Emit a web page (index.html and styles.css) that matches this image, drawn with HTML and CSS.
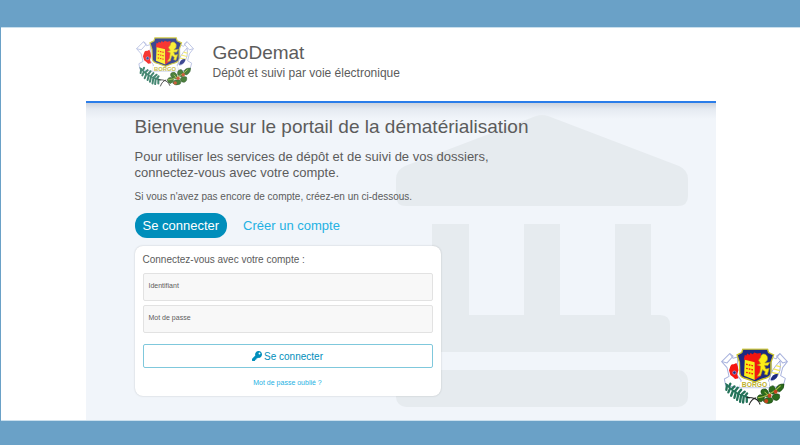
FILE: index.html
```html
<!DOCTYPE html>
<html lang="fr">
<head>
    <meta charset="UTF-8">
    <meta name="viewport" content="width=device-width, initial-scale=1.0">
    <title>GeoDemat</title>
    <link rel="stylesheet" href="styles.css">
</head>
<body>
    <div class="page">
        <div class="portal">
            <header class="header">
                <svg class="crest crest-header" viewBox="0 0 200 172" role="img" aria-label="Borgo">
                    <!-- Blason : ruban, écu, coquelicot, coquillage, feuillages -->
                    <symbol id="crest" viewBox="0 0 200 172">
                        <g fill="#fff" stroke="#aab4de" stroke-width="3" stroke-linejoin="round">
                            <path d="M50 26 L36 30 L26 16 L2 40 L18 58 L24 84 L10 92 L14 112 L56 118 L60 96 L48 80 Z"/>
                            <path d="M150 26 L164 32 L176 16 L198 40 L184 58 L178 82 L192 90 L186 112 L146 118 L142 96 L152 80 Z"/>
                            <path d="M26 16 L36 24 L18 44 L2 40 M176 16 L166 24 L184 44 L198 40" fill="none"/>
                        </g>
                        <path d="M56 100 H144 V118 H56 Z" fill="#fff"/>
                        <path d="M56 118 H144" stroke="#aab4de" stroke-width="2"/>
                        <path d="M65 3 H139 L142 13 L157 20 L149 42 V76 Q146 88 124 92 L102 101 L78 92 Q58 88 56 76 L55 42 L48 20 L62 13 Z" fill="#1c2a80" stroke="#c9c32c" stroke-width="4"/>
                        <path d="M71 32 L101 38 V95 L69 82 Z" fill="#fbee16"/>
                        <path d="M101 38 L120 30 V82 L101 95 Z" fill="#f51510"/>
                        <path d="M68 34 L71 20 L76 22 L78 16 L85 20 L88 14 L95 18 L99 13 L108 16 L119 14 V31 L101 42 Z" fill="#f51510"/>
                        <path d="M75 48 l22 5 M75 60 l22 5 M75 72 l22 5" fill="none" stroke="#f51510" stroke-width="4" stroke-dasharray="5 3"/>
                        <path d="M118 28 Q120 14 132 18 Q142 24 138 36 L131 44 L146 42 L140 52 L130 52 L134 62 L144 60 L138 80 L130 78 L132 70 L124 64 L118 82 L108 84 L116 72 L118 54 L108 50 L118 46 L112 36 Z" fill="#fbee16" stroke="#a8971c" stroke-width="2"/>
                        <path d="M28 54 Q30 46 38 48 L46 44 L50 54 L52 66 L48 78 L52 90 L42 92 L36 86 L28 80 L24 66 Z" fill="#f51510"/>
                        <circle cx="40" cy="73" r="5" fill="#1c2a80" stroke="#9eb0e8" stroke-width="2"/>
                        <path d="M176 38 Q182 70 162 92 Q146 104 146 88 Q148 68 176 38 Z" fill="#fff" stroke="#7886c8" stroke-width="2"/>
                        <path d="M164 52 L178 56 M156 62 L176 67 M151 72 L172 77" stroke="#f3e85a" stroke-width="4"/>
                        <path d="M149 96 Q150 76 170 76 Q170 94 149 96 Z" fill="#1c2a80"/>
                        <text x="100" y="116" class="crest-name" text-anchor="middle">BORGO</text>
                        <g fill="none" stroke="#25735a" stroke-width="7" stroke-linecap="round">
                            <path d="M14 106 Q36 136 84 148" stroke-width="4"/>
                            <path d="M18 110 L16 124 M27 120 L22 132 M36 127 L30 142 M44 132 L40 148 M52 136 L48 154 M60 140 L57 160 M68 143 L66 162 M77 146 L77 160"/>
                            <path d="M24 114 L28 106 M32 122 L40 114 M42 128 L50 118 M52 134 L60 124 M62 138 L71 130 M72 143 L78 135"/>
                        </g>
                        <g fill="#2c6b1c" stroke="#174512" stroke-width="2">
                            <path d="M108 148 Q112 134 128 142 Q134 150 120 160 Q110 160 108 148 Z"/>
                            <path d="M120 134 Q116 120 134 122 Q146 130 140 144 Q126 146 120 134 Z"/>
                            <path d="M126 158 Q130 146 146 147 Q160 150 152 162 Q136 170 126 158 Z"/>
                            <path d="M144 130 Q140 114 156 112 Q166 120 162 134 Q154 142 144 130 Z"/>
                            <path d="M152 146 Q158 132 174 138 Q178 152 166 156 Q156 156 152 146 Z"/>
                            <path d="M164 122 Q168 106 188 107 Q190 120 176 130 Q166 132 164 122 Z"/>
                        </g>
                        <path d="M110 148 Q146 144 178 112 M130 130 L142 142" fill="none" stroke="#a9c04a" stroke-width="3"/>
                        <g fill="#c4451c">
                            <circle cx="145" cy="142" r="6"/>
                            <circle cx="135" cy="158" r="6"/>
                            <circle cx="163" cy="130" r="6"/>
                        </g>
                        <path d="M84 170 Q90 152 104 148 M76 147 L92 148 Q110 150 117 168" fill="none" stroke="#222" stroke-width="3"/>
                    </symbol>
                    <use href="#crest"/>
                </svg>
                <div>
                    <h1 class="brand">GeoDemat</h1>
                    <p class="tagline">Dépôt et suivi par voie électronique</p>
                </div>
            </header>

            <main class="main">
                <svg class="bank" viewBox="0 0 292 292" aria-hidden="true">
                    <path d="M140 1 Q146 -1 152 1 L283 51 Q292 55 292 64 V81 Q292 91 282 91 H10 Q0 91 0 81 V64 Q0 55 9 51 Z"/>
                    <path d="M36 109 H73 V200 H128 V109 H164 V200 H219 V109 H255 V200 H264 Q274 200 274 210 V237 H18 V210 Q18 200 28 200 H36 Z"/>
                    <rect y="255" width="292" height="37" rx="10"/>
                </svg>

                <div class="content">
                    <h2 class="title">Bienvenue sur le portail de la dématérialisation</h2>
                    <p class="lead">Pour utiliser les services de dépôt et de suivi de vos dossiers,<br>connectez-vous avec votre compte.</p>
                    <p class="hint">Si vous n'avez pas encore de compte, créez-en un ci-dessous.</p>

                    <div class="tabs">
                        <button type="button" class="tab tab-active">Se connecter</button>
                        <button type="button" class="tab">Créer un compte</button>
                    </div>

                    <form class="card">
                        <p class="card-title">Connectez-vous avec votre compte :</p>
                        <div class="field">
                            <label for="login">Identifiant</label>
                            <input type="text" id="login">
                        </div>
                        <div class="field">
                            <label for="password">Mot de passe</label>
                            <input type="password" id="password">
                        </div>
                        <button type="submit" class="submit">
                            <svg class="key" viewBox="0 0 512 512" aria-hidden="true">
                                <path d="M512 176c0 97-79 176-176 176-11 0-22-1-33-3l-24 27a24 24 0 0 1-18 8h-37v40a24 24 0 0 1-24 24h-40v40a24 24 0 0 1-24 24H24a24 24 0 0 1-24-24v-78c0-6 3-12 7-17l162-162a176 176 0 1 1 343-55zM336 128a48 48 0 1 0 96 0 48 48 0 1 0-96 0z"/>
                            </svg>
                            Se connecter
                        </button>
                        <a class="forgot" href="#">Mot de passe oublié ?</a>
                    </form>
                </div>
            </main>
        </div>

        <svg class="crest crest-corner" viewBox="0 0 200 172" role="img" aria-label="Borgo">
            <use href="#crest"/>
        </svg>
    </div>
</body>
</html>
```
FILE: styles.css
```css
* {
    box-sizing: border-box;
}

body {
    margin: 0;
    min-height: 100vh;
    padding: 27px 0 25px 1px;
    background-color: #6aa1c7;
    color: #5c5c5c;
    font-family: "Liberation Sans", Arial, sans-serif;
    display: flex;
}

h1, h2, p {
    margin: 0;
    font-weight: normal;
}

button, input {
    font-family: inherit;
}

.page {
    position: relative;
    flex: 1;
    display: flex;
    justify-content: center;
    background-color: #fff;
    border-top: 1px solid #c9dfed;
    border-bottom: 1px solid #c9dfed;
}

.portal {
    width: 100%;
    max-width: 630px;
    display: flex;
    flex-direction: column;
}

/* Header */
.header {
    display: flex;
    align-items: flex-start;
    gap: 19px;
    padding: 9px 50px 14px;
    border-bottom: 2px solid #2b7de9;
}

.crest {
    display: block;
}

.crest-header {
    width: 58px;
    height: 50px;
    opacity: 0.85;
}

.crest-corner {
    position: absolute;
    right: 12px;
    bottom: 14px;
    width: 67px;
    height: 58px;
}

.crest-name {
    font-family: "Liberation Sans", Arial, sans-serif;
    font-size: 20px;
    font-weight: bold;
    fill: #bdb12c;
}

.brand {
    margin-top: 4px;
    font-size: 19px;
    line-height: 24px;
}

.tagline {
    font-size: 12px;
    line-height: 16px;
}

/* Main */
.main {
    position: relative;
    flex: 1;
    padding: 12px 27px 24px 49px;
    background: linear-gradient(#cdd3dc, #e5eaf1 6px, #f1f5fa 16px);
}

.bank {
    position: absolute;
    top: 12px;
    right: 28px;
    width: 292px;
    height: 292px;
    fill: #e6ebef;
}

.content {
    position: relative;
}

.title {
    font-size: 19px;
    line-height: 24px;
}

.lead {
    margin-top: 10px;
    font-size: 13px;
    line-height: 16px;
}

.hint {
    margin-top: 10px;
    font-size: 10px;
    line-height: 12px;
}

.tabs {
    display: flex;
    gap: 8px;
    margin-top: 10px;
}

.tab {
    padding: 0 8px;
    border: none;
    border-radius: 12px;
    background: none;
    color: #24b1e3;
    font-size: 13px;
    line-height: 25px;
    cursor: pointer;
}

.tab-active {
    background-color: #008ebb;
    color: #fff;
}

/* Login card */
.card {
    max-width: 306px;
    margin-top: 8px;
    padding: 8px;
    border-radius: 8px;
    background-color: #fff;
    box-shadow: 0 0 2px rgba(0, 0, 0, 0.2);
    display: flex;
    flex-direction: column;
}

.card-title {
    margin-bottom: 7px;
    font-size: 10px;
    line-height: 12px;
}

.field {
    position: relative;
    margin-bottom: 4px;
}

.field label {
    position: absolute;
    top: 8px;
    left: 6px;
    font-size: 7px;
    line-height: 10px;
}

.field input {
    display: block;
    width: 100%;
    height: 28px;
    padding: 8px 6px;
    border: 1px solid #e2e2e2;
    border-radius: 2px;
    background-color: #f8f8f8;
    font-size: 7px;
}

.submit {
    display: flex;
    justify-content: center;
    align-items: center;
    gap: 2px;
    height: 24px;
    margin-top: 7px;
    padding: 0;
    border: 1px solid #7fc8dc;
    border-radius: 2px;
    background-color: #fff;
    color: #008ebb;
    font-size: 10px;
    cursor: pointer;
}

.key {
    width: 10px;
    height: 10px;
    fill: #008ebb;
}

.forgot {
    align-self: center;
    margin-top: 10px;
    color: #24b1e3;
    font-size: 7px;
    line-height: 10px;
    text-decoration: none;
}
```
